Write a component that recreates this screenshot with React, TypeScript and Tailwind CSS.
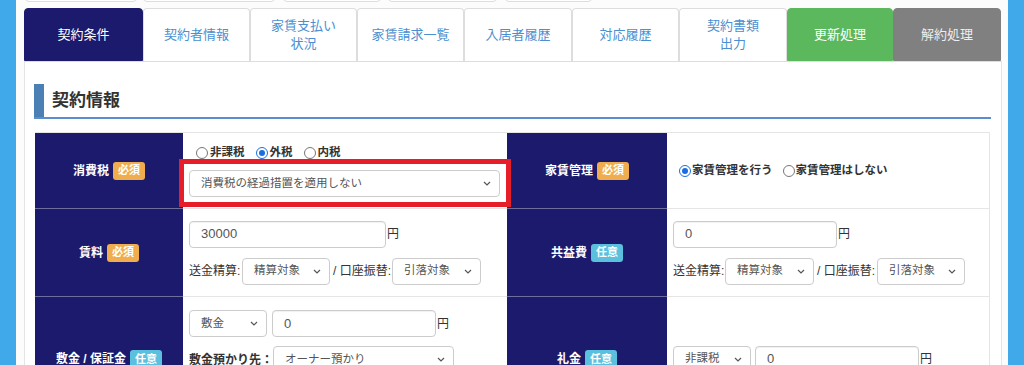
import React from "react";

const Chevron = () => (
  <svg width="8" height="5" viewBox="0 0 8 5" className="shrink-0">
    <polyline points="1,1 4,4 7,1" fill="none" stroke="#555" strokeWidth="1.2" />
  </svg>
);

const Select = ({ w, text, bold }: { w: number; text: string; bold?: boolean }) => (
  <div
    className="h-[27px] flex items-center justify-between pl-[11px] pr-[8px] border border-[#ccc] rounded-[4px] bg-white text-[11.5px] text-[#555] shrink-0"
    style={{ width: w }}
  >
    <span className={bold ? "font-bold" : ""}>{text}</span>
    <Chevron />
  </div>
);

const Input = ({ w, text }: { w: number; text: string }) => (
  <div
    className="h-[27px] flex items-center pl-[11px] border border-[#ccc] rounded-[4px] bg-white text-[13px] text-[#555] shrink-0 shadow-[inset_0_1px_1px_rgba(0,0,0,0.06)]"
    style={{ width: w }}
  >
    {text}
  </div>
);

const Radio = ({ checked }: { checked?: boolean }) =>
  checked ? (
    <span className="inline-flex items-center justify-center w-[12px] h-[12px] rounded-full border-[1.5px] border-[#1a6fe0] bg-white shrink-0">
      <span className="w-[6px] h-[6px] rounded-full bg-[#1a6fe0]" />
    </span>
  ) : (
    <span className="inline-block w-[12px] h-[12px] rounded-full border border-[#777] bg-white shrink-0" />
  );

const Badge = ({ kind }: { kind: "req" | "opt" }) => (
  <span
    className={
      "inline-flex items-center h-[18px] px-[5px] rounded-[3px] text-[11px] font-bold text-white ml-[4px] " +
      (kind === "req" ? "bg-[#f0ad4e]" : "bg-[#5bc0de]")
    }
  >
    {kind === "req" ? "必須" : "任意"}
  </span>
);

const Th = ({ label, kind }: { label: string; kind: "req" | "opt" }) => (
  <div className="bg-[#1b1a6c] border-b border-[#6e6e9e] flex items-center justify-center text-white text-[12px] font-bold">
    <span>{label}</span>
    <Badge kind={kind} />
  </div>
);

const Tab = ({
  w,
  lines,
  variant,
}: {
  w: number;
  lines: string[];
  variant: "active" | "normal" | "green" | "gray";
}) => {
  const cls =
    variant === "active"
      ? "bg-[#1b1a6c] text-white border-[#1b1a6c]"
      : variant === "green"
      ? "bg-[#5cb85c] text-white border-[#5cb85c]"
      : variant === "gray"
      ? "bg-[#808080] text-[#eee] border-[#808080]"
      : "bg-white text-[#4b8fd1] border-[#ddd] border-b-0";
  return (
    <div
      className={"h-[53px] flex flex-col items-center justify-center rounded-t-[4px] border text-[13px] leading-[18px] shrink-0 " + cls}
      style={{ width: w }}
    >
      {lines.map((l) => (
        <span key={l}>{l}</span>
      ))}
    </div>
  );
};

export default function App() {
  const tabs: { w: number; lines: string[]; variant: "active" | "normal" | "green" | "gray" }[] = [
    { w: 119, lines: ["契約条件"], variant: "active" },
    { w: 107, lines: ["契約者情報"], variant: "normal" },
    { w: 107, lines: ["家賃支払い", "状況"], variant: "normal" },
    { w: 107, lines: ["家賃請求一覧"], variant: "normal" },
    { w: 108, lines: ["入居者履歴"], variant: "normal" },
    { w: 107, lines: ["対応履歴"], variant: "normal" },
    { w: 108, lines: ["契約書類", "出力"], variant: "normal" },
    { w: 106, lines: ["更新処理"], variant: "green" },
    { w: 108, lines: ["解約処理"], variant: "gray" },
  ];
  const topBits = [
    [25, 112],
    [143, 132],
    [283, 98],
    [388, 109],
    [505, 87],
  ];
  return (
    <div className="w-[1024px] h-[365px] overflow-hidden flex bg-white font-['Liberation_Sans','Noto_Sans_CJK_JP',sans-serif] text-[#333]">
      <div className="w-[16px] shrink-0 bg-[#3fa9ea]" />
      <div className="w-[992px] shrink-0 bg-[#fcfcfc]">
        {/* remnants of the row above */}
        <div className="h-[2px] overflow-hidden relative">
          {topBits.map(([x, w]) => (
            <div
              key={x}
              className="absolute top-[-8px] h-[10px] border border-[#ddd] rounded-b-[4px] bg-white"
              style={{ left: x - 16, width: w }}
            />
          ))}
        </div>
        <div className="ml-[8px] mt-[6px] w-[978px]">
          <div className="flex border-b border-[#ddd]">
            {tabs.map((t) => (
              <Tab key={t.lines[0]} {...t} />
            ))}
          </div>
          <div className="bg-white border-x border-[#e5e5e5] pl-[9px] pt-[22px] h-[400px]">
            <div className="w-[957px] h-[35px] flex items-stretch border-b-2 border-[#5b8fcc]">
              <div className="w-[10px] bg-[#4a80b4]" />
              <div className="pl-[8px] flex items-center text-[17px] font-bold text-[#333]">契約情報</div>
            </div>
            <div className="relative ml-[1px] mt-[13px] w-[955px] border-t border-r border-[#e5e5e5] grid grid-cols-[148px_324px_160px_323px] grid-rows-[76px_88px_125px]">
              {/* Row 1 */}
              <Th label="消費税" kind="req" />
              <div className="border-b border-[#e5e5e5] flex flex-col justify-center pl-[6px] gap-[9px]">
                <div className="flex items-center text-[11.5px] font-bold text-[#333] pl-[7px] gap-[1px]">
                  <Radio />
                  <span className="ml-[1px]">非課税</span>
                  <span className="w-[9px]" />
                  <Radio checked />
                  <span className="ml-[1px]">外税</span>
                  <span className="w-[9px]" />
                  <Radio />
                  <span className="ml-[1px]">内税</span>
                </div>
                <Select w={311} text="消費税の経過措置を適用しない" />
              </div>
              <Th label="家賃管理" kind="req" />
              <div className="border-b border-[#e5e5e5] flex items-center pl-[12px] text-[11.5px] font-bold text-[#333]">
                <Radio checked />
                <span className="ml-[1px]">家賃管理を行う</span>
                <span className="w-[10px]" />
                <Radio />
                <span className="ml-[1px]">家賃管理はしない</span>
              </div>

              {/* Row 2 */}
              <Th label="賃料" kind="req" />
              <div className="border-b border-[#e5e5e5] flex flex-col justify-center pl-[6px] gap-[10px] text-[12px]">
                <div className="flex items-center gap-[1px]">
                  <Input w={197} text="30000" />
                  <span>円</span>
                </div>
                <div className="flex items-center">
                  <span className="w-[53px]">送金精算:</span>
                  <Select w={88} text="精算対象" />
                  <span className="ml-[3px] w-[59px]">/ 口座振替:</span>
                  <Select w={89} text="引落対象" />
                </div>
              </div>
              <Th label="共益費" kind="opt" />
              <div className="border-b border-[#e5e5e5] flex flex-col justify-center pl-[6px] gap-[10px] text-[12px]">
                <div className="flex items-center gap-[1px]">
                  <Input w={164} text="0" />
                  <span>円</span>
                </div>
                <div className="flex items-center">
                  <span className="w-[52px]">送金精算:</span>
                  <Select w={89} text="精算対象" />
                  <span className="ml-[3px] w-[60px]">/ 口座振替:</span>
                  <Select w={88} text="引落対象" />
                </div>
              </div>

              {/* Row 3 */}
              <Th label="敷金 / 保証金" kind="opt" />
              <div className="border-b border-[#e5e5e5] flex flex-col justify-start pt-[13px] pl-[6px] gap-[9px] text-[12px]">
                <div className="flex items-center">
                  <Select w={78} text="敷金" />
                  <div className="ml-[5px]">
                    <Input w={164} text="0" />
                  </div>
                  <span className="ml-[1px]">円</span>
                </div>
                <div className="flex items-center">
                  <span className="w-[84px] font-bold">敷金預かり先：</span>
                  <Select w={181} text="オーナー預かり" />
                </div>
                <div className="flex items-center">
                  <Select w={181} text="保証金" />
                </div>
              </div>
              <Th label="礼金" kind="opt" />
              <div className="border-b border-[#e5e5e5] flex items-center pl-[6px] text-[12px]">
                <Select w={78} text="非課税" />
                <div className="ml-[4px]">
                  <Input w={164} text="0" />
                </div>
                <span className="ml-[1px]">円</span>
              </div>

              {/* red annotation box */}
              <div className="absolute left-[144px] top-[26px] w-[332px] h-[48px] border-[5px] border-[#e61e2a] pointer-events-none z-10" />
            </div>
          </div>
        </div>
      </div>
      <div className="w-[16px] shrink-0 bg-[#3fa9ea]" />
    </div>
  );
}
